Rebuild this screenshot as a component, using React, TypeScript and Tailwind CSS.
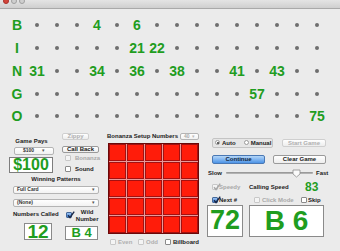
import React from "react";

const GREEN = "text-[#1f9d1f]";

const rows = [
  { l: "B", base: 0, called: [4, 6] },
  { l: "I", base: 15, called: [21, 22] },
  { l: "N", base: 30, called: [31, 34, 36, 38, 41, 43] },
  { l: "G", base: 45, called: [57] },
  { l: "O", base: 60, called: [75] },
];

function Check({ checked, disabled }: { checked?: boolean; disabled?: boolean }) {
  const box = checked && !disabled
    ? "bg-gradient-to-b from-[#9cc4f2] to-[#3f82da] border-[#46699a]"
    : disabled
    ? "bg-[#f4f4f4] border-[#c8c8c8]"
    : "bg-white border-[#8a8a8a]";
  return (
    <span className={`relative shrink-0 w-[6px] h-[6px] rounded-[1px] border ${box}`}>
      {checked && (
        <svg className="absolute left-[0px] top-[-2px]" width="8" height="8" viewBox="0 0 8 8">
          <path
            d="M1 4.2 L3 6.5 L7.2 0.6"
            fill="none"
            stroke={disabled ? "#a8a8a8" : "#1b2a4a"}
            strokeWidth="1.4"
          />
        </svg>
      )}
    </span>
  );
}

function Radio({ on }: { on?: boolean }) {
  return (
    <span className="shrink-0 w-[5px] h-[5px] rounded-full border border-[#9a9a9a] bg-white flex items-center justify-center">
      {on && <span className="w-[2px] h-[2px] rounded-full bg-[#333]" />}
    </span>
  );
}

function Select({ text, className, disabled }: { text: string; className: string; disabled?: boolean }) {
  return (
    <div
      className={`flex items-center justify-between bg-gradient-to-b from-white to-[#f2f2f2] border border-[#b4b4b4] rounded-[2px] px-[3px] ${className}`}
    >
      <span className={`text-[5px] font-bold ${disabled ? "text-[#aaa]" : "text-[#333]"}`}>{text}</span>
      <span className={`text-[5px] ${disabled ? "text-[#bbb]" : "text-[#555]"}`}>▾</span>
    </div>
  );
}

function Button({ text, className, disabled }: { text: string; className: string; disabled?: boolean }) {
  return (
    <div
      className={`flex items-center justify-center rounded-[2px] border bg-gradient-to-b from-white to-[#ededed] ${
        disabled ? "border-[#cfcfcf] text-[#b0b0b0]" : "border-[#9a9a9a] text-[#1a1a1a]"
      } text-[6px] font-bold ${className}`}
    >
      {text}
    </div>
  );
}

export default function App() {
  return (
    <div className="w-[340px] h-[251px] bg-[#ebebeb] overflow-hidden flex flex-col font-['Liberation_Sans',sans-serif] text-[#222] leading-none">
      {/* title bar */}
      <div className="h-[9px] shrink-0 bg-gradient-to-b from-[#e4e4e4] to-[#cfcfcf] border-b border-[#a9a9a9] overflow-hidden flex items-end gap-[2px] pl-[3px] pb-[4px]">
        <span className="shrink-0 w-[6px] h-[6px] rounded-full bg-[#d4453b] border border-[#a8302a]" />
        <span className="shrink-0 w-[6px] h-[6px] rounded-full bg-[#cfcfcf] border border-[#a0a0a0]" />
        <span className="shrink-0 w-[6px] h-[6px] rounded-full bg-[#cfcfcf] border border-[#a0a0a0]" />
      </div>

      {/* bingo board */}
      <div className="pt-[5px] pl-[7px] shrink-0">
        {rows.map((r) => (
          <div key={r.l} className="h-[22.75px] flex items-center">
            <div className={`w-[20px] flex justify-center text-[14px] font-bold ${GREEN}`}>{r.l}</div>
            {Array.from({ length: 15 }, (_, i) => {
              const n = r.base + i + 1;
              const on = r.called.includes(n);
              return (
                <div key={n} className="w-[20px] flex justify-center items-center">
                  {on ? (
                    <span className={`text-[14px] font-bold ${GREEN}`}>{n}</span>
                  ) : (
                    <span className="w-[4px] h-[4px] rounded-full bg-[#6e6e6e]" />
                  )}
                </div>
              );
            })}
          </div>
        ))}
      </div>

      {/* controls */}
      <div className="flex flex-1">
        {/* column A */}
        <div className="w-[100px] shrink-0 flex flex-col">
          <div className="flex pl-[9px] gap-[8px]">
            <div className="w-[45px] flex flex-col items-center pt-[10px]">
              <div className="h-[7px] leading-[7px] text-[6px] font-bold text-[#222]">Game Pays</div>
              <Select text="$100" className="mt-[2px] w-[40px] h-[8px] self-end justify-center gap-[8px]" />
              <div className="mt-[2px] self-start w-[44px] h-[16px] bg-white border border-[#7d7d7d] flex items-center justify-center">
                <span className={`text-[16px] font-bold ${GREEN}`}>$100</span>
              </div>
            </div>
            <div className="w-[37px] flex flex-col pt-[5px]">
              <Button text="Zippy" disabled className="w-[27px] h-[7px]" />
              <Button text="Call Back" className="mt-[6px] w-[37px] h-[7px]" />
              <div className="mt-[2px] h-[7px] pl-[3px] flex items-center gap-[4px]">
                <Check disabled />
                <span className="text-[6px] font-bold text-[#a9a9a9]">Bonanza</span>
              </div>
              <div className="mt-[4px] h-[7px] pl-[3px] flex items-center gap-[4px]">
                <Check />
                <span className="text-[6px] font-bold text-[#222]">Sound</span>
              </div>
            </div>
          </div>

          <div className="pl-[13px] w-[99px] flex flex-col">
            <div className="mt-[3px] h-[7px] leading-[7px] text-center text-[6px] font-bold">Winning Patterns</div>
            <Select text="Full Card" className="mt-[3px] w-full h-[8px]" />
            <Select text="(None)" className="mt-[5px] w-full h-[8px]" />
            <div className="mt-[2px] h-[14px] flex items-start">
              <span className="mt-[2px] w-[50px] text-[6px] font-bold leading-[7px] whitespace-nowrap">Numbers Called</span>
              <span className="ml-[4px] mt-[3px] flex">
                <Check checked />
              </span>
              <span className="ml-[3px] w-[24px] text-center text-[6px] font-bold leading-[7px]">
                Wild
                <br />
                Number
              </span>
            </div>
            <div className="flex items-end">
              <div className="ml-[11px] w-[28px] h-[17px] bg-white border border-[#8a8a8a] flex items-center justify-center">
                <span className={`text-[19px] font-bold ${GREEN}`}>12</span>
              </div>
              <div className="ml-[13px] w-[33px] h-[14px] bg-white border border-[#8a8a8a] flex items-center justify-center">
                <span className={`text-[13px] font-bold ${GREEN} whitespace-pre`}>B 4</span>
              </div>
            </div>
          </div>
        </div>

        {/* column B: bonanza */}
        <div className="ml-[7px] w-[93px] shrink-0 flex flex-col">
          <div className="mt-[5px] h-[7px] flex items-center">
            <span className="w-[73px] text-[6px] font-bold whitespace-nowrap">Bonanza Setup Numbers</span>
            <Select text="40" disabled className="w-[19px] h-[7px]" />
          </div>
          <div className="mt-[3px] ml-[1px] w-[91px] h-[91px] border border-[#6a0808] bg-[#e89a9a] grid grid-cols-5 grid-rows-5 gap-[1px]">
            {Array.from({ length: 25 }, (_, i) => (
              <div key={i} className="bg-[#ff1c0a] border border-[#a31010]" />
            ))}
          </div>
          <div className="mt-[5px] h-[7px] flex items-center">
            <span className="ml-[3px] flex">
              <Check disabled />
            </span>
            <span className="ml-[2px] w-[18px] text-[6px] font-bold text-[#b0b0b0]">Even</span>
            <span className="ml-[2px] flex">
              <Check disabled />
            </span>
            <span className="ml-[2px] w-[17px] text-[6px] font-bold text-[#b0b0b0]">Odd</span>
            <span className="ml-[2px] flex">
              <Check />
            </span>
            <span className="ml-[2px] text-[6px] font-bold">Billboard</span>
          </div>
        </div>

        {/* column C */}
        <div className="ml-[7px] w-[122px] shrink-0 flex flex-col">
          <div className="mt-[10px] h-[10px] flex items-center">
            <div className="ml-[5px] w-[61px] h-[10px] border border-[#c4c4c4] rounded-[2px] bg-[#e6e6e6] flex items-center pl-[2px]">
              <Radio on />
              <span className="ml-[2px] text-[6px] font-bold">Auto</span>
              <span className="ml-[8px] flex">
                <Radio />
              </span>
              <span className="ml-[2px] text-[6px] font-bold">Manual</span>
            </div>
            <Button text="Start Game" disabled className="ml-[9px] w-[44px] h-[8px]" />
          </div>
          <div className="mt-[7px] h-[9px] flex items-center">
            <div className="ml-[5px] w-[53px] h-[9px] rounded-[2px] border border-[#4a78b4] bg-gradient-to-b from-[#b4d6f8] to-[#4b93e6] flex items-center justify-center text-[6px] font-bold text-[#0f1f3a]">
              Continue
            </div>
            <Button text="Clear Game" className="ml-[8px] w-[53px] h-[9px]" />
          </div>
          <div className="mt-[5px] h-[8px] flex items-center">
            <span className="ml-[1px] w-[18px] text-[6px] font-bold">Slow</span>
            <div className="w-[87px] h-[8px] flex items-center relative">
              <div className="w-full h-[2px] rounded-full bg-[#b2b2b2] border-t border-[#9a9a9a]" />
              <svg className="absolute left-[66px] top-[0px]" width="9" height="9" viewBox="0 0 9 9">
                <path d="M1 1 H8 V5 L4.5 8 L1 5 Z" fill="#fafafa" stroke="#8e8e8e" strokeWidth="0.8" />
              </svg>
            </div>
            <span className="ml-[3px] text-[6px] font-bold">Fast</span>
          </div>
          <div className="mt-[6px] h-[8px] flex items-center">
            <span className="ml-[5px] flex">
              <Check checked disabled />
            </span>
            <span className="ml-[1px] w-[30px] text-[6px] font-bold text-[#a9a9a9]">Speedy</span>
            <span className="w-[56px] text-[6px] font-bold whitespace-nowrap">Calling Speed</span>
            <span className={`text-[12px] font-bold ${GREEN}`}>83</span>
          </div>
          <div className="mt-[5px] h-[8px] flex items-center">
            <span className="ml-[5px] flex">
              <Check checked />
            </span>
            <span className="ml-[1px] w-[35px] text-[6px] font-bold">Next #</span>
            <Check disabled />
            <span className="ml-[2px] w-[39px] text-[6px] font-bold text-[#a9a9a9]">Click Mode</span>
            <Check />
            <span className="ml-[1px] text-[6px] font-bold">Skip</span>
          </div>
          <div className="mt-[1px] h-[32px] flex">
            <div className="w-[36px] h-[32px] bg-white border border-[#8a8a8a] flex items-center justify-center">
              <span className={`text-[27px] font-bold ${GREEN}`}>72</span>
            </div>
            <div className="ml-[6px] w-[75px] h-[32px] bg-white border border-[#8a8a8a] flex items-center justify-center">
              <span className={`text-[28px] font-bold ${GREEN} whitespace-pre`}>B 6</span>
            </div>
          </div>
        </div>
      </div>
    </div>
  );
}
